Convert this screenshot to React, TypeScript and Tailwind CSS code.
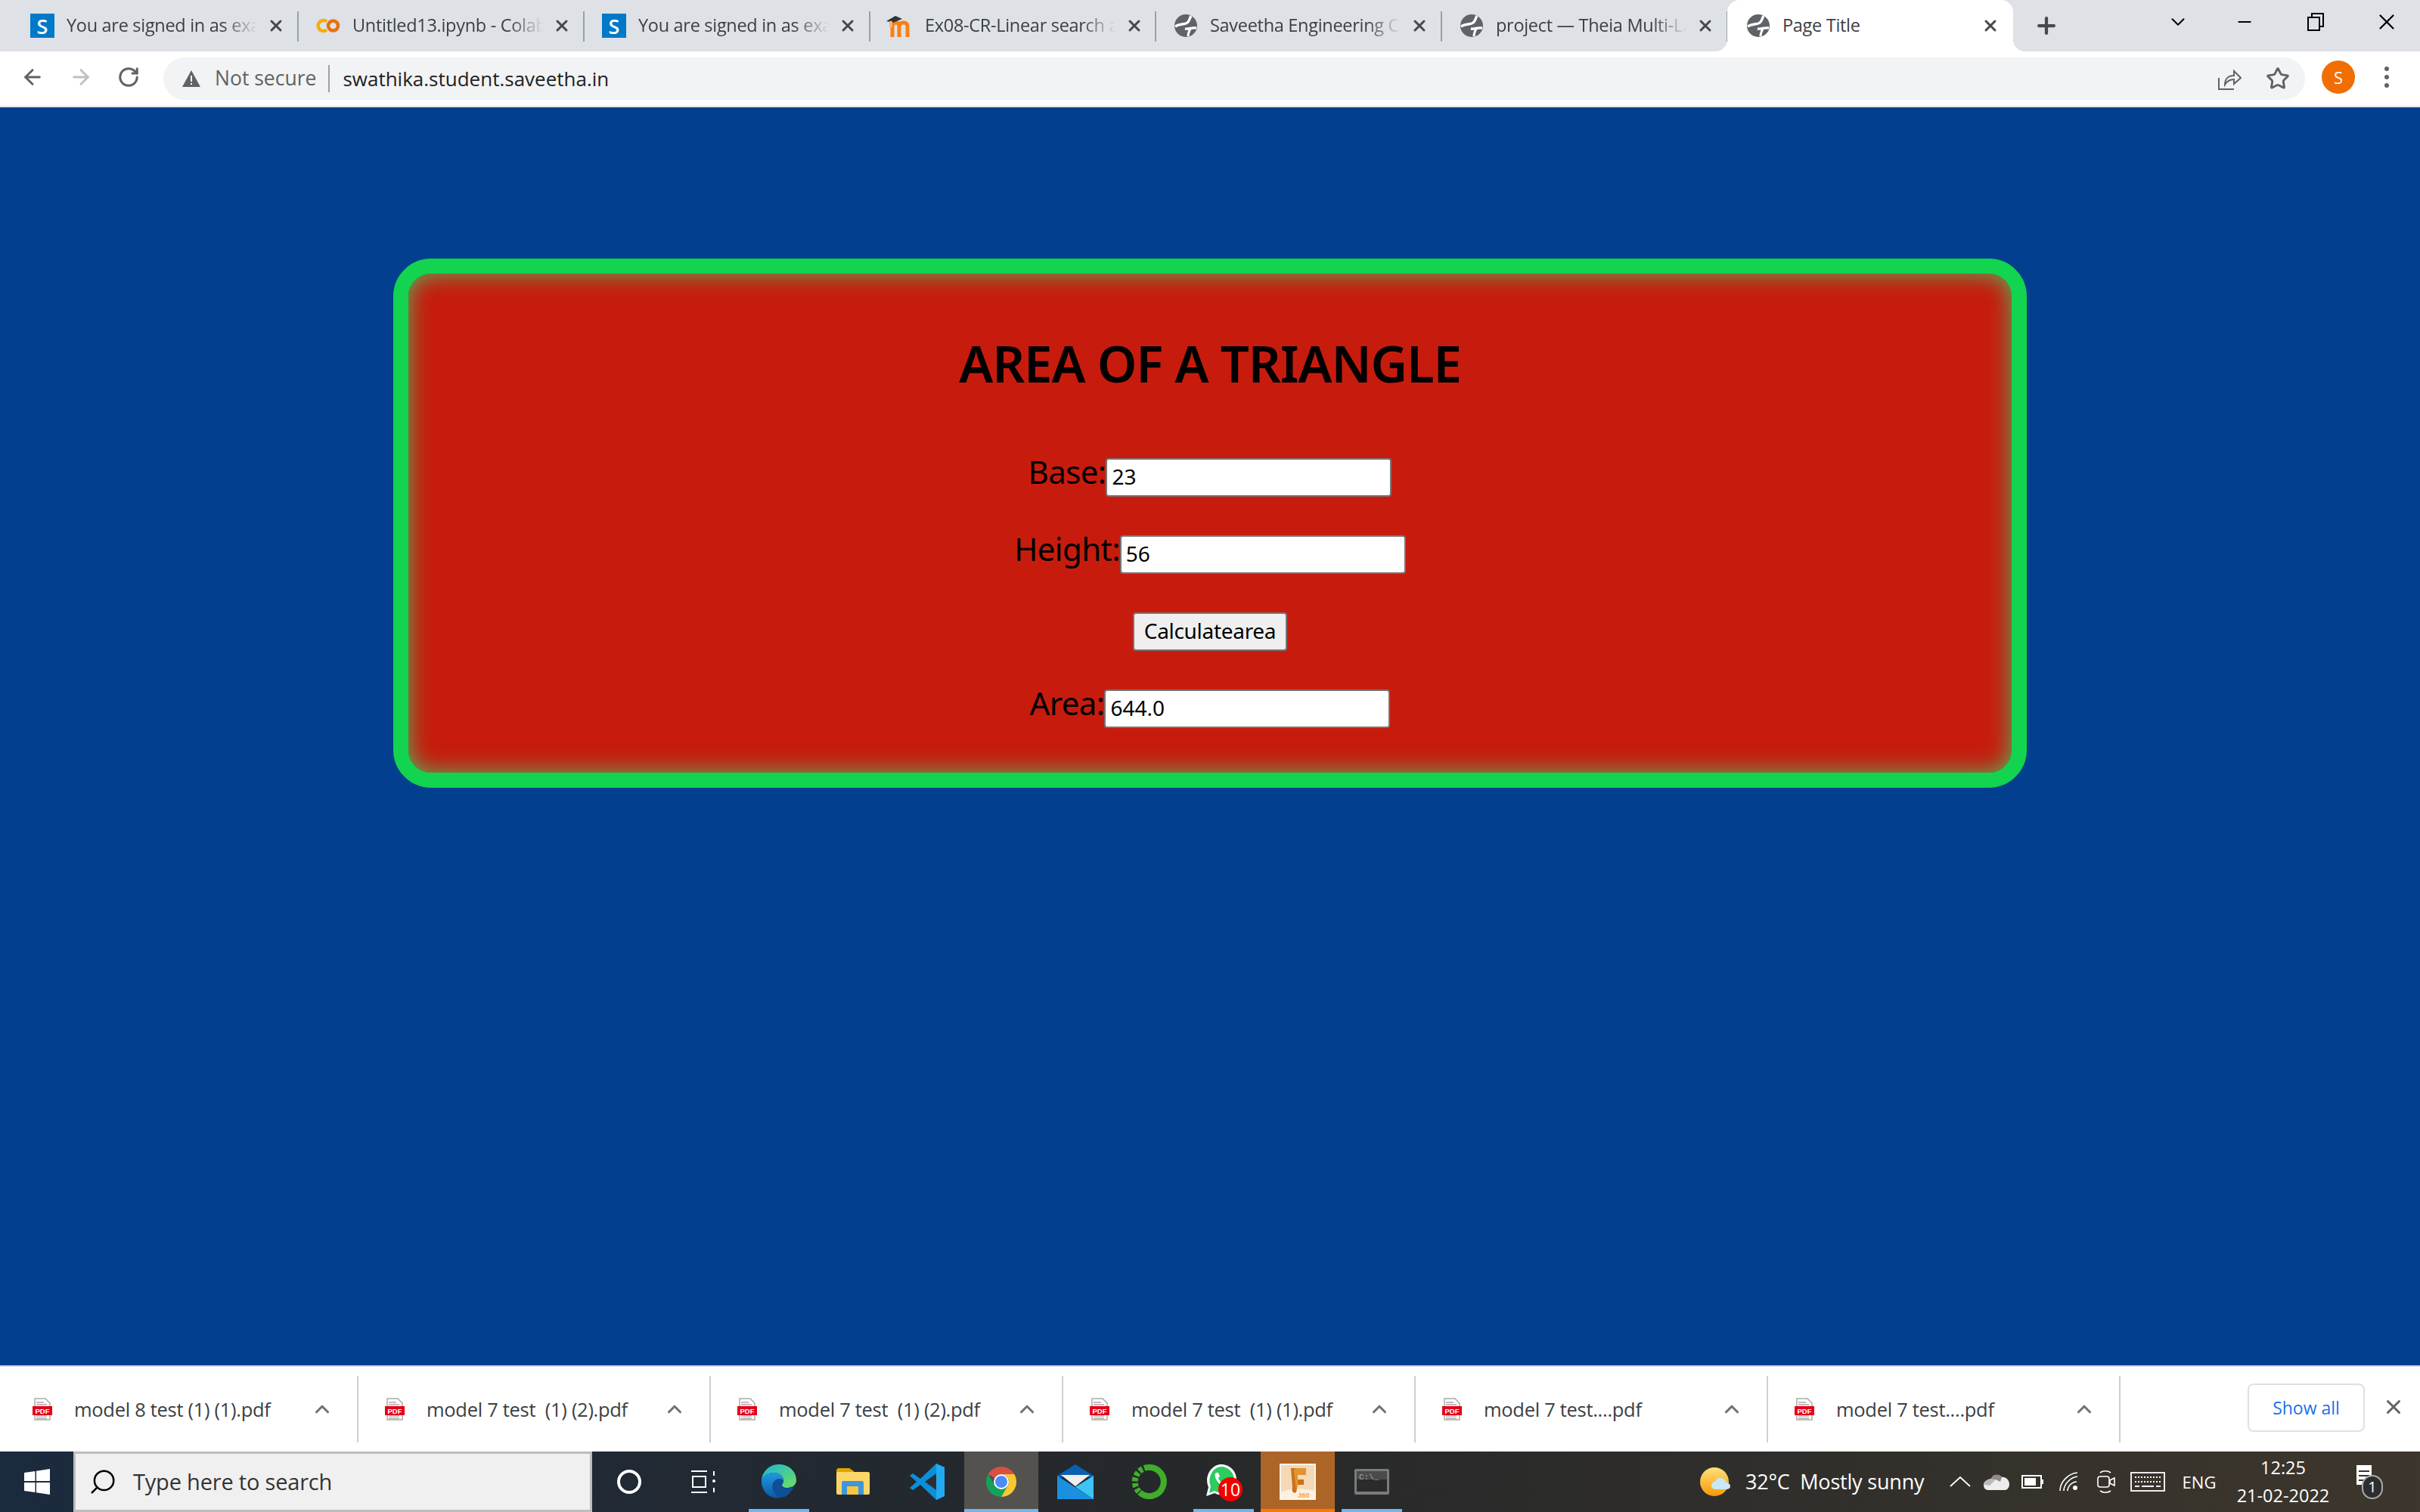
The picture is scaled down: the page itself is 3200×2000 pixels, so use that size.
import type { ReactNode } from "react";
import { ChevronUp, X, Plus, ArrowLeft, ArrowRight, RotateCw, Star, Search, Minus, ChevronDown } from "lucide-react";

function SiteIcon() {
  return (
    <div className="w-8 h-8 bg-[#0079c9] flex items-center justify-center shrink-0">
      <span className="text-white font-semibold text-[27px] leading-none font-['Open_Sans',sans-serif]">S</span>
    </div>
  );
}

function ColabIcon() {
  return (
    <svg width="32" height="32" viewBox="0 0 32 32" className="shrink-0">
      <path d="M14 10.500a7 7 0 1 0 0 11" fill="none" stroke="#f9ab00" strokeWidth="4.500" />
      <circle cx="22.500" cy="16" r="6.500" fill="none" stroke="#e8710a" strokeWidth="4.500" />
    </svg>
  );
}

function MoodleIcon() {
  return (
    <svg width="36" height="32" viewBox="0 0 36 32" className="shrink-0 -ml-1 mr-[1px]">
      <path d="M10 31V17c0-3 2-5 5-5s4 2 4 5v14M19 31V17c0-3 2-5 5-5h1c3 0 5 2 5 5v14" fill="none" stroke="#f98012" strokeWidth="5" />
      <path d="M2 10 14 3l9 4-12 5z" fill="#333" />
      <path d="M8 10v8" stroke="#f5b27a" strokeWidth="4" />
    </svg>
  );
}

function GlobeIcon() {
  return (
    <svg width="32" height="32" viewBox="0 0 32 32" className="shrink-0">
      <circle cx="16" cy="16" r="15" fill="#5f6368" />
      <path d="M2 17C8 13 14 15 18 12C21 10 21 6 23 3" fill="none" stroke="#fff" strokeWidth="3.400" />
      <path d="M15 20C19 21 23 18 30 19" fill="none" stroke="#fff" strokeWidth="3.400" />
      <path d="M22 20C20 24 19 27 19 30" fill="none" stroke="#fff" strokeWidth="3" />
    </svg>
  );
}

function Tab({ icon, title }: { icon: ReactNode; title: string }) {
  return (
    <div className="w-[378px] h-[68px] flex items-center pl-[23px] relative shrink-0">
      {icon}
      <span className="ml-4 w-[252px] overflow-hidden whitespace-nowrap text-[23.500px] text-[#3c4043] tracking-[-0.3px] [mask-image:linear-gradient(to_right,black_82%,transparent_100%)]">
        {title}
      </span>
      <X size={24} strokeWidth={3} className="ml-[13px] text-[#45484c] shrink-0" />
      <div className="absolute right-0 top-[15px] h-10 w-[2px] bg-[#9aa0a6]" />
    </div>
  );
}

function PdfIcon() {
  return (
    <svg width="26" height="30" viewBox="0 0 26 30" className="shrink-0">
      <path d="M3 1h14l6 6v22H3z" fill="#fff" stroke="#aaa" strokeWidth="1.500" />
      <path d="M5 6h10M5 9h14M5 24h14M5 27h14" stroke="#aaa" strokeWidth="1.500" />
      <rect x="0" y="11" width="26" height="12" fill="#e2001a" />
      <text x="13" y="21" textAnchor="middle" fontSize="9.500" fontWeight="700" fill="#fff" fontFamily="Liberation Sans, sans-serif">PDF</text>
    </svg>
  );
}

function Download({ name }: { name: string }) {
  return (
    <div className="w-[466px] h-[88px] flex items-center pl-[35px] pr-[31px] border-r-2 border-[#cfcfcf] shrink-0">
      <PdfIcon />
      <span className="ml-[29px] text-[25.500px] text-[#3c4043] whitespace-pre tracking-[-0.3px]">{name}</span>
      <ChevronUp size={30} strokeWidth={2.500} className="ml-auto text-[#6f7276]" />
    </div>
  );
}

function WinLogo() {
  return (
    <svg width="34" height="34" viewBox="0 0 34 34">
      <path d="M0 5 14.500 3v13H0zM16 2.800 34 0v16H16zM0 18h14.500v13L0 29zM16 18h18v16l-18-2.800z" fill="#fff" />
    </svg>
  );
}

function EdgeIcon() {
  return (
    <svg width="48" height="48" viewBox="0 0 48 48">
      <defs>
        <linearGradient id="edgeTop" x1="0" y1="0" x2="1" y2="1">
          <stop offset="0" stopColor="#1eb4d8" />
          <stop offset="1" stopColor="#6fe05f" />
        </linearGradient>
        <linearGradient id="edgeBlue" x1="0" y1="0" x2="0" y2="1">
          <stop offset="0" stopColor="#1f9ae0" />
          <stop offset="1" stopColor="#0c59a4" />
        </linearGradient>
      </defs>
      <path d="M1 21C3 8 13 1 24 1c14 0 23 10 23 21 0 6-5 10-12 10-5 0-7-2-7-4 0-1 2-2 2-6 0-6-6-10-13-10C10 12 4 15 1 21z" fill="url(#edgeTop)" />
      <path d="M1 21c3-7 10-9 16-9 7 0 13 4 13 10-5-3-12-2-14 5-2 8 3 14 10 18-14 3-26-8-25-24z" fill="url(#edgeBlue)" />
      <path d="M16 27c2-7 9-8 14-5 0 4-2 5-2 6 0 4 6 6 11 3l5-1c-4 9-11 15-18 15-7-4-12-10-10-18z" fill="#0d4f98" />
    </svg>
  );
}

function ExplorerIcon() {
  return (
    <svg width="44" height="36" viewBox="0 0 44 36">
      <path d="M0 3c0-1 1-3 3-3h14l6 4v8H0z" fill="#e0a400" />
      <path d="M0 7c0-1 1-2 2-2h40c1 0 2 1 2 2v26c0 1-1 2-2 2H2c-1 0-2-1-2-2z" fill="#fdd667" />
      <path d="M7 35V19c0-1 1-2 2-2h25c1 0 2 1 2 2v16h-7v-9H14v9z" fill="#3e96db" />
      <path d="M14 24h15v11H14z" fill="#f7c53f" />
    </svg>
  );
}

function VsCodeIcon() {
  return (
    <svg width="48" height="48" viewBox="0 0 48 48">
      <path d="M36 0 47 5v38l-11 5L15 28 5 35 1 32l9-8-9-8 4-3 10 7z" fill="#0a8fd8" />
      <path d="M36 0 47 5v38l-11 5z" fill="#23a9f2" />
      <path d="M36 13 21 24l15 11z" fill="#2b2f33" />
    </svg>
  );
}

function ChromeIcon() {
  return (
    <svg width="44" height="44" viewBox="0 0 44 44">
      <path d="M4.700 12A20 20 0 0 1 39.300 12H22A10 10 0 0 0 13.300 17z" fill="#db4f43" />
      <path d="M4.700 12A20 20 0 0 0 22 42L30.700 27A10 10 0 0 1 13.300 27z" fill="#12a35a" />
      <path d="M39.300 12A20 20 0 0 1 22 42L30.700 27A10 10 0 0 0 22 12z" fill="#fbc72f" />
      <circle cx="22" cy="22" r="10" fill="#fff" />
      <circle cx="22" cy="22" r="8" fill="#4d8cf5" />
    </svg>
  );
}

function MailIcon() {
  return (
    <svg width="48" height="46" viewBox="0 0 48 46">
      <path d="M0 15 24 0l24 15v2H0z" fill="#0a5fb0" />
      <path d="M5 14h38L24 29z" fill="#eee" />
      <path d="M0 15v31h48L0 15z" fill="#1b90e0" />
      <path d="M48 15v31L24 30z" fill="#3cc4f5" />
    </svg>
  );
}

function GreenRingIcon() {
  return (
    <svg width="48" height="48" viewBox="0 0 48 48">
      <path d="M22 5A19 19 0 1 1 11 38" fill="none" stroke="#3fae2a" strokeWidth="8" />
      <path d="M22 5A19 19 0 0 0 11 38" fill="none" stroke="#3fae2a" strokeWidth="8" strokeDasharray="5 2.500" />
    </svg>
  );
}

function WhatsAppIcon() {
  return (
    <div className="relative w-12 h-12">
      <svg width="42" height="44" viewBox="0 0 42 44">
        <path d="M1 43 4 31C-2 18 7 1 21 1c11 0 20 9 20 20 0 15-17 25-29 18z" fill="#fff" />
        <path d="M5 39 7 30C2 19 10 4 21 4c9 0 17 8 17 17 0 13-15 22-26 15z" fill="#2ccc5e" />
        <path d="M14 12c-3 3-1 8 3 13s9 7 12 5l1-3-5-3-2 2c-3-1-5-4-6-7l2-2-2-5z" fill="#fff" />
      </svg>
      <div className="absolute left-[17px] top-[18px] w-8 h-8 rounded-full bg-[#f50000] text-white text-[23px] leading-8 text-center">10</div>
    </div>
  );
}

function FusionIcon() {
  return (
    <svg width="48" height="48" viewBox="0 0 48 48">
      <rect width="48" height="48" fill="#fdf3e6" />
      <rect x="2" y="2" width="44" height="36" fill="#f5d8b5" />
      <path d="M2 38c10-6 30-6 44-2v10H2z" fill="#fdf0e2" />
      <path d="M15 6h20v9H24v6h8v7h-8l-2 10c-5 2-6-2-5-7z" fill="#c9711c" />
      <path d="M24 15h11V6H24c-4 0-6 2-5 6l3 22c3-4 2-14 2-19z" fill="#eea33a" opacity="0.700" />
      <text x="32" y="45" textAnchor="middle" fontSize="9" fontWeight="700" fill="#f0a350" fontFamily="Liberation Sans, sans-serif">360</text>
    </svg>
  );
}

function CmdIcon() {
  return (
    <svg width="46" height="34" viewBox="0 0 46 34">
      <rect width="46" height="34" rx="2" fill="#7b7b7b" />
      <rect x="3" y="3" width="40" height="27" fill="#2b2b2b" />
      <rect x="3" y="3" width="40" height="11" fill="#4b4b4b" />
      <text x="6" y="14" fontSize="11" fill="#a5a5a5" fontFamily="Liberation Mono, monospace">C:\_</text>
    </svg>
  );
}

function Slot({ children, bg, bar }: { children: ReactNode; bg?: string; bar?: string }) {
  return (
    <div className={"w-[98px] h-20 shrink-0 relative flex items-center justify-center " + (bg || "")}>
      {children}
      {bar && <div className={"absolute bottom-0 h-1 " + bar} />}
    </div>
  );
}

function TrayIcons() {
  return (
    <div className="flex items-center h-20 text-white">
      <div className="w-12 flex justify-center">
        <svg width="28" height="16" viewBox="0 0 28 16"><path d="M1 14 14 2l13 12" fill="none" stroke="#fff" strokeWidth="1.800" /></svg>
      </div>
      <div className="w-12 flex justify-center">
        <svg width="34" height="22" viewBox="0 0 34 22">
          <path d="M10 7c2-6 10-7 14-2 4-1 10 3 10 9 0 5-3 8-6 8H6c-4 0-6-3-6-7s4-7 10-8z" fill="#ededed" />
          <path d="M10 7c2-6 10-7 14-2l-2 6-6-3c-2 0-4 1-6 3z" fill="#8b8b8b" />
          <path d="M0 15c0-4 4-7 10-8l6 1-8 8z" fill="#b9b9b9" />
        </svg>
      </div>
      <div className="w-12 flex justify-center">
        <svg width="30" height="18" viewBox="0 0 30 18">
          <rect x="1" y="1" width="25" height="16" fill="none" stroke="#fff" strokeWidth="2" />
          <rect x="4" y="4" width="15" height="10" fill="#fff" />
          <rect x="27" y="6" width="2" height="6" fill="#fff" />
        </svg>
      </div>
      <div className="w-12 flex justify-center">
        <svg width="26" height="26" viewBox="0 0 26 26" fill="none" stroke="#fff" strokeWidth="1.600">
          <path d="M1 25C1 13 12 2 24 1M6 25C6 16 15 7 24 6M11 25c0-6 6-12 12-12" />
          <circle cx="21" cy="21" r="3" fill="#fff" stroke="none" />
        </svg>
      </div>
      <div className="w-[50px] flex justify-center">
        <svg width="24" height="32" viewBox="0 0 24 32" fill="none" stroke="#fff" strokeWidth="1.600">
          <path d="M4 4c4-3 10-3 14 0M4 28c4 3 10 3 14 0" />
          <rect x="1" y="9" width="15" height="14" rx="3" />
          <path d="M17 14l6-3v10l-6-3z" />
        </svg>
      </div>
      <div className="w-[60px] flex justify-center">
        <svg width="46" height="26" viewBox="0 0 46 26" fill="none" stroke="#fff">
          <rect x="1" y="1" width="44" height="24" strokeWidth="1.800" />
          <path d="M6 7h34M6 13h34" strokeWidth="2" strokeDasharray="2 2" />
          <path d="M6 19h6M15 19h16M34 19h6" strokeWidth="2" />
        </svg>
      </div>
      <div className="w-[76px] text-center text-[22px]">ENG</div>
      <div className="w-[146px] flex flex-col items-center text-[23.500px] leading-[37px]">
        <span>12:25</span>
        <span>21-02-2022</span>
      </div>
      <div className="w-[84px] flex justify-center">
        <div className="relative w-9 h-10">
          <svg width="24" height="34" viewBox="0 0 24 34" className="mt-[-2px]">
            <path d="M0 0h20v26H0z" fill="#fff" />
            <path d="M3 8h14M3 14h14M3 20h10" stroke="#333" strokeWidth="2" />
          </svg>
          <div className="absolute left-[7px] top-[11px] w-7 h-8 rounded-full bg-[#2e2e2e] border-2 border-[#aaa] text-white text-[20px] leading-7 text-center">1</div>
        </div>
      </div>
    </div>
  );
}

function Field({ label, value }: { label: string; value: string }) {
  return (
    <div className="h-[51px] flex items-start">
      <label className="text-[42px] leading-[35px] tracking-[-0.6px]">{label}</label>
      <input readOnly value={value} className="w-[378px] h-[51px] border-2 border-[#767676] rounded-[4px] bg-white px-[6px] pb-1 text-[28px] text-black" />
    </div>
  );
}

export default function App() {
  return (
    <div className="w-[3200px] h-[2000px] flex flex-col overflow-hidden font-['Open_Sans',sans-serif]">
      {/* tab strip */}
      <div className="h-[68px] bg-[#dee1e6] flex pl-[17px] shrink-0">
        <Tab icon={<SiteIcon />} title="You are signed in as exam" />
        <Tab icon={<ColabIcon />} title="Untitled13.ipynb - Colab" />
        <Tab icon={<SiteIcon />} title="You are signed in as exam" />
        <Tab icon={<MoodleIcon />} title="Ex08-CR-Linear search alg" />
        <Tab icon={<GlobeIcon />} title="Saveetha Engineering Coll" />
        <Tab icon={<GlobeIcon />} title="project — Theia Multi-Language" />
        <div className="relative w-[378px] h-[68px] bg-white rounded-t-[16px] flex items-center pl-[25px] shrink-0 -ml-px">
          <div className="absolute bottom-0 -left-4 w-4 h-4 bg-[radial-gradient(circle_at_0_0,transparent_16px,white_16px)]" />
          <div className="absolute bottom-0 -right-4 w-4 h-4 bg-[radial-gradient(circle_at_100%_0,transparent_16px,white_16px)]" />
          <GlobeIcon />
          <span className="ml-4 w-[252px] text-[23.500px] text-[#3c4043] tracking-[-0.3px]">Page Title</span>
          <X size={24} strokeWidth={3} className="ml-[11px] text-[#45484c]" />
        </div>
        <Plus size={34} strokeWidth={3} className="ml-[27px] mt-[17px] text-[#45484c]" />
        <ChevronDown size={30} strokeWidth={1.600} className="ml-[142px] mt-[14px] text-black" />
        <Minus size={26} strokeWidth={2} className="ml-[60px] mt-4 text-black" />
        <svg width="22" height="24" viewBox="0 0 22 24" className="ml-[70px] mt-[17px]" fill="none" stroke="#000" strokeWidth="2">
          <rect x="1" y="6" width="15" height="17" />
          <path d="M6 6V1h15v17h-5" />
        </svg>
        <X size={34} strokeWidth={1.600} className="ml-[66px] mt-3 text-black" />
      </div>

      {/* toolbar */}
      <div className="h-[74px] bg-white border-b-2 border-[#e3e4e6] flex items-start shrink-0">
        <div className="w-[216px] h-[72px] flex items-center pl-[27px] gap-[32px] pb-[4px] shrink-0">
          <ArrowLeft size={32} strokeWidth={2.200} className="text-[#5f6368]" />
          <ArrowRight size={32} strokeWidth={2.200} className="text-[#bdc1c6]" />
          <RotateCw size={30} strokeWidth={2.400} className="text-[#5f6368]" />
        </div>
        <div className="w-[2832px] h-14 mt-2 rounded-full bg-[#f1f3f4] flex items-center pl-6 pr-5 shrink-0">
          <svg width="26" height="24" viewBox="0 0 26 24">
            <path d="M13 1 25 23H1z" fill="#5f6368" />
            <path d="M12 8h2v8h-2zM12 18h2v2h-2z" fill="#fff" />
          </svg>
          <span className="ml-[18px] text-[26.500px] text-[#5f6368]">Not secure</span>
          <div className="w-[2px] h-9 bg-[#9aa0a6] ml-4 mr-[17px]" />
          <span className="text-[26px] text-[#202124]">swathika.student.saveetha.in</span>
          <svg width="32" height="32" viewBox="0 0 32 32" className="ml-auto" fill="none" stroke="#5f6368" strokeWidth="2">
            <path d="M2 15v15h20" />
            <path d="M10 24c0-8 5-12 12-12V6l9 9-9 8v-6c-5 0-9 2-12 7z" />
          </svg>
          <Star size={32} strokeWidth={2.200} className="ml-[32px] text-[#5f6368]" />
        </div>
        <div className="flex items-center h-[72px] pb-1">
          <div className="w-11 h-11 rounded-full bg-[#f16e00] text-white text-[22px] flex items-center justify-center ml-[22px]">S</div>
          <div className="ml-[39px] flex flex-col gap-[5px]">
            <div className="w-[6px] h-[6px] rounded-full bg-[#5f6368]" />
            <div className="w-[6px] h-[6px] rounded-full bg-[#5f6368]" />
            <div className="w-[6px] h-[6px] rounded-full bg-[#5f6368]" />
          </div>
        </div>
      </div>

      {/* page */}
      <div className="flex-1 bg-[#023f8e] pt-[200px] font-['Noto_Sans',sans-serif] text-black">
        <div className="w-[2160px] h-[700px] mx-auto rounded-[50px] border-[20px] border-[#12d44f] bg-[#c71c0d] shadow-[inset_0_0_30px_#4fb860] flex flex-col items-center pt-[74px]">
          <h1 className="text-[67px] leading-[88px] font-semibold tracking-[-1.100px] whitespace-nowrap">AREA OF A TRIANGLE</h1>
          <div className="mt-[82px] flex flex-col items-center gap-[51px]">
            <Field label="Base:" value="23" />
            <Field label="Height:" value="56" />
            <button className="w-[204px] h-[51px] border-2 border-[#767676] rounded-[4px] bg-[#efefef] text-[28px] leading-none tracking-[-0.3px] pb-1">Calculatearea</button>
            <Field label="Area:" value="644.0" />
          </div>
        </div>
      </div>

      {/* downloads */}
      <div className="h-[114px] bg-white border-t-2 border-[#d6d6d6] flex items-start pt-3 shrink-0">
        <div className="flex w-[2804px] shrink-0 pl-[8px]">
          <Download name="model 8 test (1) (1).pdf" />
          <Download name="model 7 test  (1) (2).pdf" />
          <Download name="model 7 test  (1) (2).pdf" />
          <Download name="model 7 test  (1) (1).pdf" />
          <Download name="model 7 test....pdf" />
          <Download name="model 7 test....pdf" />
        </div>
        <button className="ml-[168px] mt-[10px] w-[155px] h-16 rounded-[8px] border-2 border-[#e0e0e0] text-[23px] font-medium text-[#1a73e8] shrink-0">Show all</button>
        <X size={30} strokeWidth={2.400} className="ml-[23px] mt-[26px] text-[#5f6368] shrink-0" />
      </div>

      {/* taskbar */}
      <div className="h-20 flex shrink-0 items-center bg-linear-to-r from-[#1b2a3e] via-[#26282a] to-[#3d362c]">
        <div className="w-[97px] flex justify-center shrink-0"><WinLogo /></div>
        <div className="w-[686px] h-20 bg-[#f0f0f0] border-[3px] border-[#bdbdbd] flex items-center pl-[17px] shrink-0">
          <Search size={38} strokeWidth={1.600} className="text-black -scale-x-100" />
          <span className="ml-[21px] text-[29px] text-[#333] tracking-[-0.2px]">Type here to search</span>
        </div>
        <Slot><div className="w-8 h-8 rounded-full border-[4px] border-white" /></Slot>
        <Slot>
          <svg width="32" height="30" viewBox="0 0 32 30" fill="none" stroke="#fff" strokeWidth="2">
            <path d="M0 1h21M0 29h21" />
            <rect x="2" y="8" width="17" height="14" />
            <path d="M30 1v6M30 23v6" />
            <circle cx="30" cy="14" r="2" fill="#fff" stroke="none" />
          </svg>
        </Slot>
        <div className="w-[2px] shrink-0" />
        <Slot bar="w-20 bg-[#76b5ea]"><EdgeIcon /></Slot>
        <Slot><ExplorerIcon /></Slot>
        <Slot><VsCodeIcon /></Slot>
        <Slot bg="bg-[#53524f]" bar="inset-x-0 bg-[#76b5ea]"><ChromeIcon /></Slot>
        <Slot><MailIcon /></Slot>
        <Slot><GreenRingIcon /></Slot>
        <Slot bar="w-20 bg-[#76b5ea]"><WhatsAppIcon /></Slot>
        <Slot bg="bg-[#ad6527]" bar="inset-x-0 bg-[#f57a0a]"><FusionIcon /></Slot>
        <Slot bar="w-20 bg-[#76b5ea]"><CmdIcon /></Slot>
        <div className="ml-auto flex items-center text-white pr-[24px]">
          <svg width="40" height="40" viewBox="0 0 40 40">
            <defs>
              <linearGradient id="sunFill" x1="0" y1="0" x2="0" y2="1">
                <stop offset="0" stopColor="#fde07a" />
                <stop offset="1" stopColor="#f79a06" />
              </linearGradient>
            </defs>
            <circle cx="19" cy="20" r="19" fill="url(#sunFill)" />
            <path d="M21 30c-4 0-6-2-6-5s2-5 5-5c1-3 3-5 7-5s7 3 7 6c3 0 6 2 6 5s-3 4-6 4z" fill="#c9e7f8" />
          </svg>
          <span className="w-[280px] pl-5 text-[27px] whitespace-pre tracking-[-0.2px]">32°C  Mostly sunny</span>
          <TrayIcons />
        </div>
      </div>
    </div>
  );
}
